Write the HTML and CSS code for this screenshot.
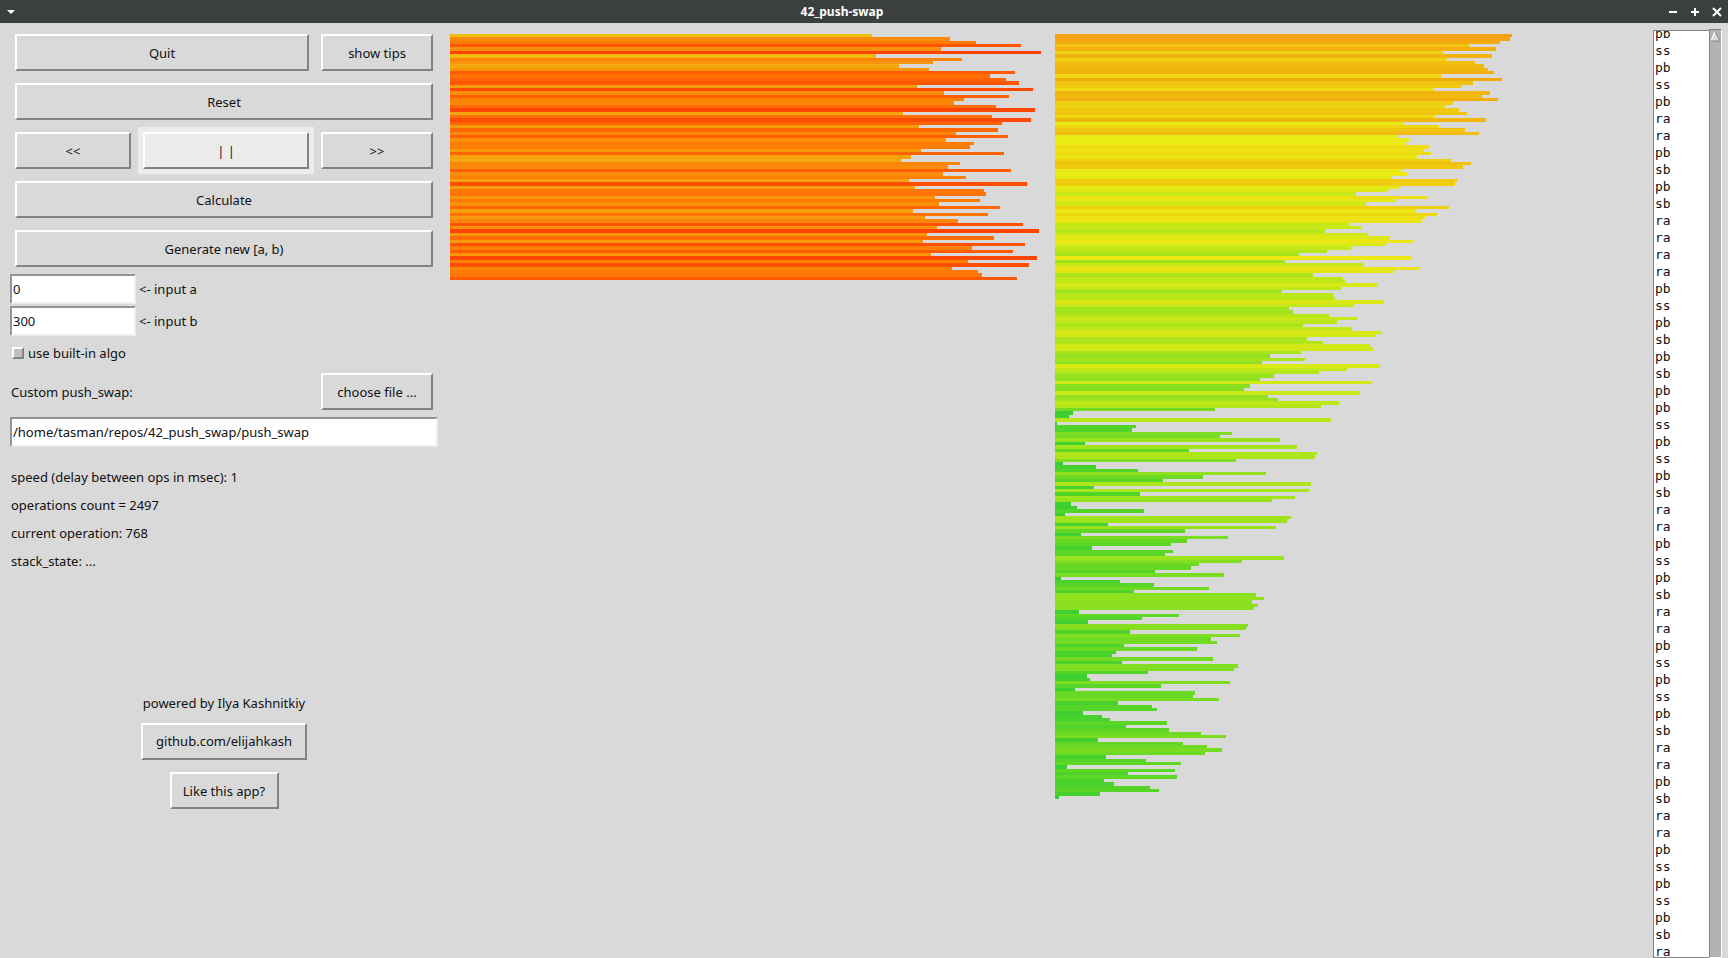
FILE: index.html
```html
<!DOCTYPE html>
<html lang="en">
<head>
  <meta charset="UTF-8">
  <meta name="viewport" content="width=device-width, initial-scale=1.0">
  <title>42_push-swap</title>
  <link rel="stylesheet" href="styles.css">
</head>
<body>
<header class="titlebar">
  <button class="win-btn" aria-label="Window menu">
    <svg width="10" height="6" viewBox="0 0 10 6"><path d="M1 1h8L5 5z" fill="#fff"/></svg>
  </button>
  <h1 class="title">42_push-swap</h1>
  <button class="win-btn" aria-label="Minimize">
    <svg width="10" height="10" viewBox="0 0 10 10"><path d="M1 5h8" stroke="#fff" stroke-width="2"/></svg>
  </button>
  <button class="win-btn" aria-label="Maximize">
    <svg width="10" height="10" viewBox="0 0 10 10"><path d="M1 5h8M5 1v8" stroke="#fff" stroke-width="2"/></svg>
  </button>
  <button class="win-btn" aria-label="Close">
    <svg width="10" height="10" viewBox="0 0 10 10"><path d="M1 1l8 8M9 1l-8 8" stroke="#fff" stroke-width="2"/></svg>
  </button>
</header>

<main class="app">
  <section class="panel">
    <div class="controls">
      <button class="btn wide">Quit</button>
      <button class="btn">show tips</button>
      <button class="btn full">Reset</button>
      <button class="btn">&lt;&lt;</button>
      <button class="btn active">| |</button>
      <button class="btn">&gt;&gt;</button>
      <button class="btn full">Calculate</button>
      <button class="btn full">Generate new [a, b)</button>
    </div>

    <div class="field">
      <input type="text" class="entry" id="inputA" value="0">
      <label for="inputA">&lt;- input a</label>
    </div>
    <div class="field">
      <input type="text" class="entry" id="inputB" value="300">
      <label for="inputB">&lt;- input b</label>
    </div>
    <div class="check">
      <input type="checkbox" id="builtin">
      <label for="builtin">use built-in algo</label>
    </div>

    <div class="file-row">
      <label for="path">Custom push_swap:</label>
      <button class="btn choose">choose file ...</button>
    </div>
    <input type="text" class="entry path" id="path" value="/home/tasman/repos/42_push_swap/push_swap">

    <div class="status">
      <p>speed (delay between ops in msec): 1</p>
      <p>operations count = 2497</p>
      <p>current operation: 768</p>
      <p>stack_state: ...</p>
    </div>

    <div class="credits">
      <p>powered by Ilya Kashnitkiy</p>
      <a class="btn link" href="https://github.com/elijahkash">github.com/elijahkash</a>
      <button class="btn like">Like this app?</button>
    </div>
  </section>

  <section class="stacks">
    <div class="stack" id="stackA"></div>
    <div class="stack" id="stackB"></div>
  </section>

  <aside class="log">
    <ol class="ops" id="ops"></ol>
    <div class="scrollbar">
      <svg width="11" height="12" viewBox="0 0 11 12">
        <path d="M5 1L1 11h9z" fill="#d9d9d9"/>
        <path d="M5 1L1 11" stroke="#fff"/>
        <path d="M5 1l5 10H1" fill="none" stroke="#828282"/>
      </svg>
    </div>
  </aside>
</main>

<script>
  const MAX = 1773;

  const stackA = [
    1266, 1500, 1578, 1712, 1473, 1773, 1278, 1535, 1448, 1347, 1437, 1695, 1620, 1668, 1707,
    1401, 1749, 1483, 1677, 1542, 1512, 1638, 1755, 1359, 1626, 1743, 1656, 1407, 1644, 1518,
    1674, 1488, 1572, 1560, 1413, 1662, 1383, 1353, 1530, 1495, 1683, 1479, 1548, 1377, 1731,
    1395, 1602, 1608, 1455, 1590, 1468, 1650, 1389, 1614, 1425, 1524, 1719, 1461, 1767, 1432,
    1632, 1419, 1725, 1566, 1689, 1443, 1761, 1554, 1737, 1506, 1584, 1596, 1701
  ];

  const stackB = [
    1371, 1365, 1335, 1242, 1323, 1164, 1311, 1176, 1260, 1287, 1299, 1317, 1158, 1341, 1254,
    1218, 1134, 1305, 1281, 1329, 1194, 1170, 1212, 1236, 1140, 1293, 1047, 1152, 1230, 1272,
    1030, 1062, 1053, 1122, 1104, 1128, 1085, 1188, 1248, 1224, 1041, 1058, 1011, 1206, 1200,
    1034, 999, 904, 1116, 1023, 934, 1183, 1083, 1146, 1110, 1098, 883, 919, 810, 939,
    1005, 1076, 993, 889, 816, 732, 1070, 691, 926, 1091, 1016, 775, 863, 869, 970,
    858, 681, 834, 839, 986, 896, 703, 713, 822, 907, 846, 744, 891, 980, 963,
    756, 804, 945, 955, 737, 645, 750, 621, 975, 876, 792, 656, 615, 951, 584,
    567, 915, 639, 669, 852, 798, 480, 54, 42, 828, 5, 243, 231, 531, 495,
    675, 90, 726, 402, 786, 780, 543, 24, 123, 249, 633, 444, 324, 768, 117,
    762, 255, 720, 651, 48, 66, 267, 30, 708, 696, 159, 663, 390, 78, 519,
    396, 348, 111, 354, 330, 687, 561, 432, 408, 300, 507, 18, 195, 297, 462,
    237, 603, 627, 591, 609, 597, 72, 372, 261, 99, 579, 573, 225, 555, 468,
    486, 207, 426, 183, 171, 474, 201, 549, 537, 279, 96, 105, 525, 318, 60,
    420, 414, 492, 189, 291, 306, 84, 141, 165, 336, 213, 342, 438, 513, 129,
    385, 456, 501, 450, 153, 273, 378, 36, 360, 219, 366, 147, 177, 285, 312,
    135, 12
  ];

  const ops = ('pb ss pb ss pb ra ra pb sb pb sb ra ra ra ra pb ss pb sb pb sb pb pb ss pb ss pb sb ' +
    'ra ra pb ss pb sb ra ra pb ss pb ss pb sb ra ra pb sb ra ra pb ss pb ss pb sb ra').split(' ');

  // green -> yellow -> red
  const gradient = [
    [0, 54, 206, 50],
    [0.2, 92, 214, 38],
    [0.35, 142, 225, 30],
    [0.5, 196, 232, 24],
    [0.6, 236, 234, 20],
    [0.7, 240, 196, 16],
    [0.77, 244, 164, 14],
    [0.9, 255, 120, 5],
    [1, 255, 66, 0]
  ];

  function colorOf(t) {
    const i = Math.max(1, gradient.findIndex(stop => t <= stop[0]));
    const [from, to] = [gradient[i - 1], gradient[i]];
    const k = (t - from[0]) / (to[0] - from[0]);
    const rgb = [1, 2, 3].map(c => Math.round(from[c] + (to[c] - from[c]) * k));
    return `rgb(${rgb.join(',')})`;
  }

  function drawStack(id, values) {
    const stack = document.getElementById(id);
    values.forEach(value => {
      const bar = document.createElement('div');
      bar.className = 'bar';
      bar.style.width = `${value / MAX * 100}%`;
      bar.style.backgroundColor = colorOf(value / MAX);
      stack.appendChild(bar);
    });
  }

  drawStack('stackA', stackA);
  drawStack('stackB', stackB);

  ops.forEach(op => {
    const item = document.createElement('li');
    item.textContent = op;
    document.getElementById('ops').appendChild(item);
  });
</script>
</body>
</html>
```
FILE: styles.css
```css
:root {
  --bg-color: #d9d9d9;
  --text-color: #111111;
  --light-edge: #ffffff;
  --dark-edge: #828282;
  --titlebar-color: #3b3f40;
}

* {
  box-sizing: border-box;
}

body {
  display: flex;
  flex-direction: column;
  height: 100vh;
  margin: 0;
  overflow: hidden;
  background-color: var(--bg-color);
  color: var(--text-color);
  font-family: 'Noto Sans', sans-serif;
  font-size: 13px;
  line-height: 20px;
}

p {
  margin: 0;
}

.titlebar {
  display: flex;
  align-items: center;
  flex-shrink: 0;
  height: 23px;
  background-color: var(--titlebar-color);
}

.title {
  flex: 1;
  margin: 0;
  color: #ffffff;
  font-size: 12px;
  font-weight: bold;
  text-align: center;
}

.win-btn {
  display: flex;
  align-items: center;
  justify-content: center;
  width: 22px;
  height: 22px;
  padding: 0;
  border: none;
  background: none;
}

.app {
  display: flex;
  flex: 1;
  min-height: 0;
  overflow: hidden;
}

.panel {
  flex-shrink: 0;
  width: 450px;
  padding: 11px 12px 0 10px;
}

.controls {
  display: grid;
  grid-template-columns: 116px 1fr 112px;
  gap: 12px;
  margin: 0 5px 7px;
}

.wide {
  grid-column: span 2;
}

.full {
  grid-column: span 3;
}

.btn {
  height: 37px;
  padding: 0 8px;
  border: 2px solid;
  border-color: var(--light-edge) var(--dark-edge) var(--dark-edge) var(--light-edge);
  background-color: var(--bg-color);
  color: var(--text-color);
  font: inherit;
  text-align: center;
  text-decoration: none;
}

.btn.active {
  background-color: #ececec;
  box-shadow: 0 0 0 5px #ececec;
}

.field {
  display: flex;
  align-items: center;
  gap: 3px;
  margin-bottom: 2px;
}

.entry {
  width: 126px;
  height: 30px;
  padding: 0 1px;
  border: 2px solid;
  border-color: #949494 #ededed #ededed #949494;
  background-color: #ffffff;
  color: var(--text-color);
  font: inherit;
}

.check {
  display: flex;
  align-items: center;
  gap: 4px;
  height: 30px;
  padding-left: 2px;
}

.check input {
  appearance: none;
  width: 12px;
  height: 12px;
  margin: 0;
  border: 2px solid;
  border-color: var(--light-edge) var(--dark-edge) var(--dark-edge) var(--light-edge);
  background-color: #bfbfbf;
}

.file-row {
  display: flex;
  align-items: center;
  justify-content: space-between;
  margin: 5px 5px 7px 0;
  padding-left: 1px;
}

.choose {
  width: 112px;
}

.path {
  display: block;
  width: 100%;
}

.status {
  display: flex;
  flex-direction: column;
  gap: 8px;
  margin-top: 20px;
  padding-left: 1px;
}

.credits {
  display: flex;
  flex-direction: column;
  align-items: center;
  gap: 12px;
  margin-top: 124px;
  line-height: 16px;
}

.link {
  width: 166px;
  line-height: 33px;
}

.like {
  width: 109px;
}

.stacks {
  display: grid;
  flex: 1;
  grid-template-columns: 1fr 1fr;
  column-gap: 14px;
  padding: 11px 7px 0 0;
  overflow: hidden;
}

.stack {
  display: grid;
  grid-template-rows: repeat(300, 1fr);
  height: 1011px;
}

.log {
  display: flex;
  flex-shrink: 0;
  width: 75px;
  padding-top: 6px;
}

.ops {
  flex: 1;
  margin: 1px 0 0;
  padding: 0 1px;
  overflow: hidden;
  border: 1px solid var(--dark-edge);
  border-right: none;
  background-color: #ffffff;
  font-family: 'DejaVu Sans Mono', monospace;
  font-size: 13px;
  line-height: 17px;
  list-style: none;
}

/* log is scrolled by a part of a line */
.ops li:first-child {
  margin-top: -6px;
}

.scrollbar {
  width: 13px;
  margin-right: 6px;
  border: 1px solid;
  border-color: var(--dark-edge) var(--light-edge) var(--light-edge) var(--dark-edge);
  background-color: #b3b3b3;
}

.scrollbar svg {
  display: block;
}
```
